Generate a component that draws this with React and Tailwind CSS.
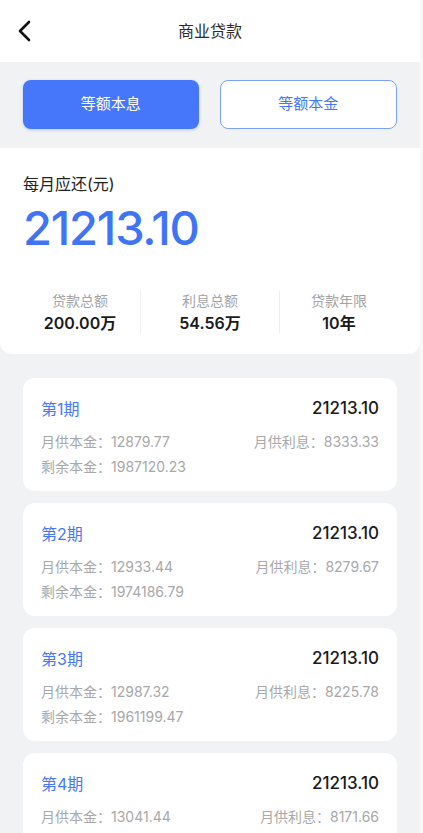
import React from "react";

const periods = [
  { no: 1, principal: "12879.77", interest: "8333.33", remain: "1987120.23" },
  { no: 2, principal: "12933.44", interest: "8279.67", remain: "1974186.79" },
  { no: 3, principal: "12987.32", interest: "8225.78", remain: "1961199.47" },
  { no: 4, principal: "13041.44", interest: "8171.66", remain: "" },
];

const App = () => {
  return (
    <div
      className="h-[833px] overflow-hidden bg-[#f9f9f9]"
      style={{ fontFamily: 'Inter, "Noto Sans CJK SC", sans-serif' }}
    >
      <div className="w-[420px] h-full bg-[#f1f2f4]">
        {/* header */}
        <div className="relative h-[62px] bg-white flex items-center justify-center">
          <svg
            className="absolute left-[16px] top-[20px]"
            width="18"
            height="22"
            viewBox="0 0 18 22"
            fill="none"
          >
            <path
              d="M13 2 L4 11 L13 20"
              stroke="#111"
              strokeWidth="2.6"
              strokeLinecap="round"
              strokeLinejoin="round"
            />
          </svg>
          <h1 className="text-[16px] text-[#2a2a2a]">商业贷款</h1>
        </div>

        {/* type switch */}
        <div className="flex gap-[21px] px-[23px] pt-[18px] pb-[19px]">
          <button className="flex-1 h-[49px] rounded-[8px] bg-[#4677fa] text-white text-[15px] shadow-[0_1px_3px_rgba(70,119,250,0.35)]">
            等额本息
          </button>
          <button className="flex-1 h-[49px] rounded-[8px] bg-white border-[1.5px] border-[#7aa0fa] text-[#4677fa] text-[15px]">
            等额本金
          </button>
        </div>

        {/* summary */}
        <div className="bg-white rounded-b-[12px] pt-[24px] pb-[20px]">
          <div className="px-[23px]">
            <p className="text-[16px] text-[#222] leading-[24px]">每月应还(元)</p>
            <p className="mt-[4px] text-[47px] leading-[56px] text-[#3f74f6] font-medium tracking-[-1.2px]">
              21213.10
            </p>
          </div>
          <div className="mt-[34px] flex">
            <div className="w-[140px] pl-[20px] flex flex-col items-center">
              <span className="text-[14px] leading-[22px] text-[#a3a3a3]">贷款总额</span>
              <span className="text-[16px] leading-[22px] font-semibold text-[#1a1a1a]">200.00万</span>
            </div>
            <div className="w-[140px] border-l border-r border-[#eeeeee] flex flex-col items-center">
              <span className="text-[14px] leading-[22px] text-[#a3a3a3]">利息总额</span>
              <span className="text-[16px] leading-[22px] font-semibold text-[#1a1a1a]">54.56万</span>
            </div>
            <div className="w-[140px] pr-[22px] flex flex-col items-center">
              <span className="text-[14px] leading-[22px] text-[#a3a3a3]">贷款年限</span>
              <span className="text-[16px] leading-[22px] font-semibold text-[#1a1a1a]">10年</span>
            </div>
          </div>
        </div>

        {/* list */}
        <div className="px-[23px] pt-[24px] flex flex-col gap-[12px]">
          {periods.map((p) => (
            <div key={p.no} className="bg-white rounded-[12px] h-[113px] px-[18px] pt-[20px]">
              <div className="flex justify-between items-center h-[22px]">
                <span className="text-[16px] text-[#4677fa]">第{p.no}期</span>
                <span className="text-[17px] font-medium text-[#1a1a1a]">21213.10</span>
              </div>
              <div className="mt-[9px] flex justify-between text-[14px] leading-[25px] text-[#a8a8a8]">
                <span>月供本金：{p.principal}</span>
                <span>月供利息：{p.interest}</span>
              </div>
              {p.remain && (
                <div className="text-[14px] leading-[25px] text-[#a8a8a8]">剩余本金：{p.remain}</div>
              )}
            </div>
          ))}
        </div>
      </div>
    </div>
  );
};

export default App;
